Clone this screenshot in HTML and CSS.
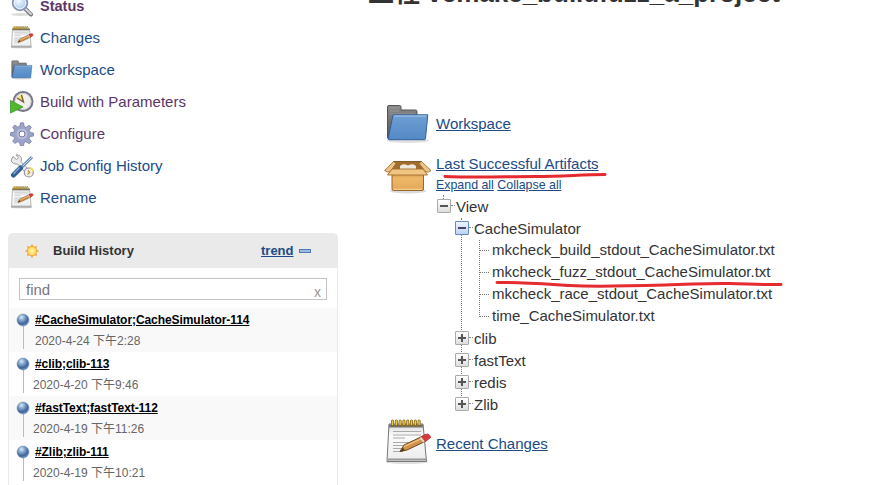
FILE: index.html
```html
<!DOCTYPE html>
<html lang="zh">
<head>
<meta charset="utf-8">
<title>Project</title>
<link rel="stylesheet" href="styles.css">
</head>
<body>
<svg class="defs" width="0" height="0" aria-hidden="true">
  <defs>
    <linearGradient id="blue" x1="0" y1="0" x2="0" y2="1"><stop offset="0" stop-color="#6f9fd3"/><stop offset="1" stop-color="#5489c6"/></linearGradient>
    <linearGradient id="grey" x1="0" y1="0" x2="0" y2="1"><stop offset="0" stop-color="#8b8b8b"/><stop offset="1" stop-color="#555"/></linearGradient>
    <linearGradient id="paper" x1="0" y1="0" x2="0" y2="1"><stop offset="0" stop-color="#d8d8d8"/><stop offset=".3" stop-color="#fbfbfb"/><stop offset="1" stop-color="#ececec"/></linearGradient>
    <linearGradient id="box" x1="0" y1="0" x2="0" y2="1"><stop offset="0" stop-color="#cf9145"/><stop offset=".35" stop-color="#eeb869"/><stop offset="1" stop-color="#e2a758"/></linearGradient>
    <radialGradient id="ball" cx=".38" cy=".28" r=".72"><stop offset="0" stop-color="#dce8f5"/><stop offset=".35" stop-color="#86a7cf"/><stop offset=".75" stop-color="#3d659d"/><stop offset="1" stop-color="#7592b8"/></radialGradient>
    <radialGradient id="sun"><stop offset="0" stop-color="#fff9b0"/><stop offset="1" stop-color="#fbd24e"/></radialGradient>
    <radialGradient id="lens" cx=".4" cy=".35" r=".7"><stop offset="0" stop-color="#f4faff"/><stop offset="1" stop-color="#9dc3f0"/></radialGradient>
    <symbol id="folder" viewBox="0 0 48 44">
      <ellipse cx="24" cy="38.500" rx="21" ry="2.500" fill="#000" opacity=".12"/>
      <path d="M3.500 36V5q0-1.500 1.500-1.500H15.500q1.500 0 1.500 1.500V8H31.500q1.500 0 1.500 1.500V36Z" fill="url(#grey)" stroke="#555"/>
      <path d="M6 6h9M6 9h9M6 12h25" stroke="#a0a0a0" stroke-width=".8"/>
      <path d="M9 12.800H43.800L41.500 36.500Q41.300 37.700 40.500 37.700H5Q4 37.700 4.200 36.500Z" fill="url(#blue)" stroke="#315f9d"/>
      <path d="M9.800 14H42.500" stroke="#a9c8ea"/>
    </symbol>
    <symbol id="note" viewBox="0 0 48 48">
      <ellipse cx="23" cy="43" rx="21" ry="2" opacity=".12"/>
      <path d="M5 5H39L42.500 42.500H3Z" fill="url(#paper)" stroke="#777"/>
      <path d="M3.500 40.500H42" stroke="#999" stroke-width="2"/>
      <path d="M5 5.500H39L39.500 8.500H4.800Z" fill="#777"/>
      <path d="M8.500 2v4M12.300 2v4M16.100 2v4M19.900 2v4M23.700 2v4M27.500 2v4M31.300 2v4M35.100 2v4" stroke="#806319" stroke-width="3" stroke-linecap="round"/>
      <path d="M8.500 2v3.500M12.300 2v3.500M16.100 2v3.500M19.900 2v3.500M23.700 2v3.500M27.500 2v3.500M31.300 2v3.500M35.100 2v3.500" stroke="#ecc94b" stroke-width="1.500" stroke-linecap="round"/>
      <path d="M9 12.500H37M9 16H37M9 19H21M9 23.500H31M9 26.500H25M9 29.500H20M9 32.500H19" stroke="#aaa"/>
      <path d="M16 32.500L20 26 39 17 42 22 23 31Z" fill="#d2924b" stroke="#6f471f" stroke-linejoin="round"/>
      <path d="M20 27.500L40 18.500" stroke="#f5c98a" stroke-width="1.300"/>
      <path d="M37 18L41 15.500Q46 14 46.500 18.500L41 23Z" fill="#dc3a3a" stroke="#992d2d" stroke-width=".8"/>
      <path d="M36.500 18.500L40 23" stroke="#ddd" stroke-width="2"/><path d="M15.500 33L19 28.500 21 31.500Z" fill="#59401f"/>
    </symbol>
    <symbol id="package" viewBox="0 0 48 36">
      <ellipse cx="24" cy="31" rx="18" ry="2.500" opacity=".14"/>
      <path d="M9.500 1.500H37.500L39 10H8Z" fill="#a06d2f" stroke="#8a5b22"/>
      <path d="M16 6q3-3 8-.5q5-2.500 8 .5v4H16Z" fill="#eee9df"/>
      <path d="M9.500 1.500L.7 10.500Q3 12.500 6 12L12 3.500ZM37.500 1.500L47 10.500Q45 12.500 42 12L35 3.500Z" fill="#edc58a" stroke="#a36d2c" stroke-width=".9"/>
      <path d="M8 12H39.500V29Q39.500 30.500 38 30.500H9.500Q8 30.500 8 29Z" fill="url(#box)" stroke="#98652b"/>
      <path d="M8 9H39L43.500 15H3.500Z" fill="#f1c582" stroke="#a36d2c" stroke-width=".9"/>
      <path d="M9.500 29.300H38" stroke="#f8d69d"/>
    </symbol>
    <symbol id="search" viewBox="0 0 24 24">
      <ellipse cx="11" cy="20.500" rx="10" ry="1.500" opacity=".14"/>
      <path d="M15 14.500L21 20.500" stroke="#777" stroke-width="4" stroke-linecap="round"/>
      <path d="M15 14.500L21 20" stroke="#d8d8d8" stroke-width="2" stroke-linecap="round"/>
      <circle cx="10" cy="9" r="7.300" fill="url(#lens)" stroke="#8794b5" stroke-width="1.800"/>
      <circle cx="10" cy="9" r="5.800" fill="none" stroke="#edf5ff"/>
    </symbol>
    <symbol id="clock" viewBox="0 0 24 24">
      <circle cx="13" cy="11.500" r="9.500" fill="#f1f1e9" stroke="#77758a" stroke-width="2"/>
      <circle cx="13" cy="11.500" r="8" fill="none" stroke="#c5c5cc" stroke-width=".8"/>
      <path d="M12 4L14 11 8 9 9 6Z" fill="#f4df74"/>
      <path d="M7 8L13.500 12 11.500 5" fill="none" stroke="#745d35" stroke-width="1.300"/>
      <path d="M.5 10.500L13 17 .5 23Z" fill="#54b82f" stroke="#38982b" stroke-width=".8"/>
    </symbol>
    <symbol id="gear" viewBox="0 0 24 24">
      <path d="M10.500 .8h3l.7 3.700 2 .8L19.300 3.200l2.100 2.100-2.100 3.100.8 2 3.400.6v3l-3.400.6-1 2 2.300 3-2.200 2.100-3.200-2-1.800.8-.7 3H10.300l-.8-3-2-.8-2.700 1.800-2.100-2.200 1.900-2.900-.8-2L.5 13.700v-3l3.300-.6.8-2L2.700 5.200 4.800 3l2.900 2 2-.8Z" fill="#9da4c9" stroke="#70769c" stroke-width=".7"/>
      <circle cx="12" cy="12" r="5.800" fill="#b9bfdd" stroke="#969cc0" stroke-width=".7"/>
      <circle cx="12" cy="12" r="3" fill="#fff" stroke="#7175a0"/>
    </symbol>
    <symbol id="tools" viewBox="0 0 24 24">
      <path d="M3 2.500L6.500 5.500 8.500 4 6 .8Q11 .8 11.500 5L11 7.500 19 16 16 19 7.500 10Q2 10.500 1.200 6Z" fill="#ececec" stroke="#929292" stroke-width=".9"/>
      <path d="M22 3L12 13" stroke="#6688b7" stroke-width="3"/><path d="M22 3L12 13" stroke="#cfdced"/>
      <path d="M10.500 14L3.500 21" stroke="#365f92" stroke-width="5" stroke-linecap="round"/><path d="M9.500 13.500L3.500 20" stroke="#7da6d5" stroke-width="1.500"/>
      <circle cx="18.800" cy="18.500" r="4.500" fill="#f5efdf" stroke="#9290a8" stroke-width="1.200"/><path d="M20 13.700q3 1 3.200 4" fill="none" stroke="#eed75b" stroke-width="1.500"/><path d="M18 16L20 18.500 17.500 20.500" fill="#e3bf55" stroke="#a18247"/>
    </symbol>
    <symbol id="orb" viewBox="0 0 14 14"><circle cx="7" cy="7" r="6" fill="url(#ball)" stroke="#6585ad" stroke-width=".5"/></symbol>
    <symbol id="sunny" viewBox="0 0 16 16">
      <path d="M8 .8L9.500 4 12.900 3.100 12 6.500 15.200 8 12 9.500 12.900 12.900 9.500 12 8 15.200 6.500 12 3.100 12.900 4 9.500 .8 8 4 6.500 3.100 3.100 6.500 4Z" fill="#f39b3d"/>
      <circle cx="8" cy="8" r="4.700" fill="url(#sun)" stroke="#f0a33a" stroke-width=".8"/>
    </symbol>
  </defs>
</svg>

<aside class="sidebar">
  <nav class="tasks">
    <a class="task visited current"><svg><use href="#search"/></svg><span>Status</span></a>
    <a class="task"><svg><use href="#note"/></svg><span>Changes</span></a>
    <a class="task"><svg><use href="#folder"/></svg><span>Workspace</span></a>
    <a class="task visited"><svg><use href="#clock"/></svg><span>Build with Parameters</span></a>
    <a class="task visited"><svg><use href="#gear"/></svg><span>Configure</span></a>
    <a class="task"><svg><use href="#tools"/></svg><span>Job Config History</span></a>
    <a class="task"><svg><use href="#note"/></svg><span>Rename</span></a>
  </nav>
  <section class="history">
    <header class="history-head">
      <svg class="weather"><use href="#sunny"/></svg>
      <h2>Build History</h2>
      <a class="trend">trend</a><i class="collapse"></i>
    </header>
    <div class="find"><span>find</span><span class="clear">x</span></div>
    <div class="build odd"><div class="rail"><svg><use href="#orb"/></svg></div><div><a>#CacheSimulator;CacheSimulator-114</a><time class="first">2020-4-24 下午2:28</time></div></div>
    <div class="build"><div class="rail"><svg><use href="#orb"/></svg></div><div><a>#clib;clib-113</a><time>2020-4-20 下午9:46</time></div></div>
    <div class="build odd"><div class="rail"><svg><use href="#orb"/></svg></div><div><a>#fastText;fastText-112</a><time>2020-4-19 下午11:26</time></div></div>
    <div class="build"><div class="rail"><svg><use href="#orb"/></svg></div><div><a>#Zlib;zlib-111</a><time>2020-4-19 下午10:21</time></div></div>
  </section>
</aside>

<main class="content">
  <h1>工程 <span>vcmake_buildfuzz_a_project</span></h1>
  <div class="item workspace"><svg class="big-folder"><use href="#folder"/></svg><a>Workspace</a></div>
  <div class="item artifacts">
    <svg class="big-package"><use href="#package"/></svg>
    <div class="artifact-body">
      <a class="artifact-link">Last Successful Artifacts</a>
      <div class="controls"><a>Expand all</a> <a>Collapse all</a></div>
      <ul class="tree">
        <li class="row"><i class="toggle root"></i>View</li>
        <li>
          <ul class="branch">
            <li class="row"><i class="toggle active"></i>CacheSimulator</li>
            <li>
              <ul class="leaves">
                <li>mkcheck_build_stdout_CacheSimulator.txt</li>
                <li>mkcheck_fuzz_stdout_CacheSimulator.txt</li>
                <li>mkcheck_race_stdout_CacheSimulator.txt</li>
                <li>time_CacheSimulator.txt</li>
              </ul>
            </li>
            <li class="row"><i class="toggle plus"></i>clib</li>
            <li class="row"><i class="toggle plus"></i>fastText</li>
            <li class="row"><i class="toggle plus"></i>redis</li>
            <li class="row"><i class="toggle plus"></i>Zlib</li>
          </ul>
        </li>
      </ul>
    </div>
  </div>
  <div class="item recent"><svg class="big-note"><use href="#note"/></svg><a>Recent Changes</a></div>
</main>
<svg class="marks" viewBox="0 0 873 485" aria-hidden="true">
  <path d="M445 176.500C480 178 505 176.500 535 176.500S580 174.500 605 174.500"/>
  <path d="M497 282.500C520 282 545 284 570 285.500S630 286 665 285S710 283 730 283.500S765 285 781 284.500"/>
</svg>
</body>
</html>
```
FILE: styles.css
```css
* { box-sizing: border-box; }
body {
  margin: 0;
  width: 873px;
  height: 485px;
  overflow: hidden;
  position: relative;
  display: flex;
  align-items: flex-start;
  background: #fff;
  color: #333;
  font-family: "Liberation Sans", "Noto Sans CJK SC", sans-serif;
  font-size: 15px;
}
.defs, .marks { position: absolute; top: 0; left: 0; }
.marks { width: 873px; height: 485px; fill: none; stroke: #e52b2f; stroke-width: 3; stroke-linecap: round; }
ul { list-style: none; margin: 0; padding: 0; }
a { color: #204a87; }

.sidebar { width: 330px; margin-left: 8px; flex: none; }
.tasks { margin-top: -10px; height: 243px; }
.task { display: flex; align-items: center; height: 32px; gap: 6px; padding-left: 2px; }
.task svg { width: 24px; height: 24px; flex: none; }
.task span { padding-bottom: 2px; }
.visited { color: #5c3566; }
.current { font-weight: bold; font-size: 14.5px; }
.task.current span { padding-bottom: 0; }

.history { border: 1px solid #eaeaea; border-radius: 5px 5px 0 0; height: 270px; }
.history-head { height: 34px; background: #eaeaea; display: flex; align-items: center; padding-left: 15px; }
.weather { width: 16px; height: 16px; }
.history-head h2 { margin: -2px 0 0 13px; font-size: 13px; width: 208px; }
.trend { font-size: 13px; font-weight: bold; text-decoration: underline; margin-top: -2px; }
.collapse { width: 12px; height: 4px; margin: 0 0 0 5px; border: 1px solid #5078b5; background: #9db9e0; }
.find { margin: 10px 10px 8px; height: 22px; border: 1px solid #c3c3c3; display: flex; justify-content: space-between; align-items: center; padding: 0 5px 0 6px; color: #777; font-size: 15px; }
.clear { font-size: 14px; padding-top: 5px; color: #999; }
.build { height: 44px; display: flex; font-size: 12px; }
.odd { background: #f9f9f9; }
.rail { width: 26px; padding: 5px 0 0 7px; background: linear-gradient(#bbb, #bbb) 14px 18px / 1px 23px no-repeat; }
.rail svg { display: block; width: 14px; height: 14px; }
.build a { display: block; height: 23px; line-height: 25px; color: #000; font-weight: bold; font-size: 12px; letter-spacing: -.07px; text-decoration: underline; }
.build time { display: block; line-height: 20px; height: 20px; margin-left: -2px; color: #666; }
.build .first { margin-left: 0; }

.content { flex: 1; padding-left: 30px; }
h1 { margin: -24px 0 0; height: 34px; line-height: 34px; font-size: 26px; white-space: nowrap; }
.item { display: flex; }
.item > a, .artifact-link, .controls a { text-decoration: underline; }
.workspace { margin-top: 92px; height: 44px; padding-left: 16px; align-items: center; }
.workspace a { padding-bottom: 1px; }
.big-folder { width: 48px; height: 44px; margin-right: 4px; }
.artifacts { padding-left: 16px; margin-top: 8px; }
.big-package { width: 48px; height: 36px; margin: 6px 4px 0 0; }
.artifact-link { display: block; line-height: 19px; }
.controls { font-size: 12.4px; height: 22px; line-height: 25px; white-space: pre; }
.row { display: flex; align-items: center; height: 22px; }
.toggle {
  position: relative; width: 14px; height: 14px; margin: 0 5px 0 1px; flex: none;
  border: 1px solid #aaa; border-radius: 1px;
  background: linear-gradient(#555, #555) center / 8px 2px no-repeat, linear-gradient(#fff, #ddd);
}
.toggle::after { content: ""; position: absolute; left: 13px; top: 5px; width: 4px; border-top: 1px dotted #888; }
.root::before { content: ""; position: absolute; left: 5px; top: -5px; height: 4px; border-left: 1px dotted #888; }
.active { border-color: #6389c0; background: linear-gradient(#446, #446) center / 8px 2px no-repeat, linear-gradient(#eef5ff, #bdd3f2); }
.plus { background: linear-gradient(#555, #555) center / 8px 2px no-repeat, linear-gradient(#555, #555) center / 2px 8px no-repeat, linear-gradient(#fff, #ddd); }
.branch { margin-left: 18px; position: relative; }
.branch::before { content: ""; position: absolute; left: 7px; top: 1px; height: 186px; border-left: 1px dotted #777; }
.leaves { margin-left: 25px; position: relative; }
.leaves::before { content: ""; position: absolute; left: 0; top: 1px; height: 77px; border-left: 1px dotted #777; }
.leaves li { height: 22px; line-height: 22px; display: flex; align-items: center; }
.leaves li::before { content: ""; width: 10px; margin-right: 3px; border-top: 1px dotted #777; }
.recent { padding-left: 16px; height: 48px; margin-top: 4px; align-items: center; }
.big-note { width: 48px; height: 48px; margin-right: 4px; }
```
